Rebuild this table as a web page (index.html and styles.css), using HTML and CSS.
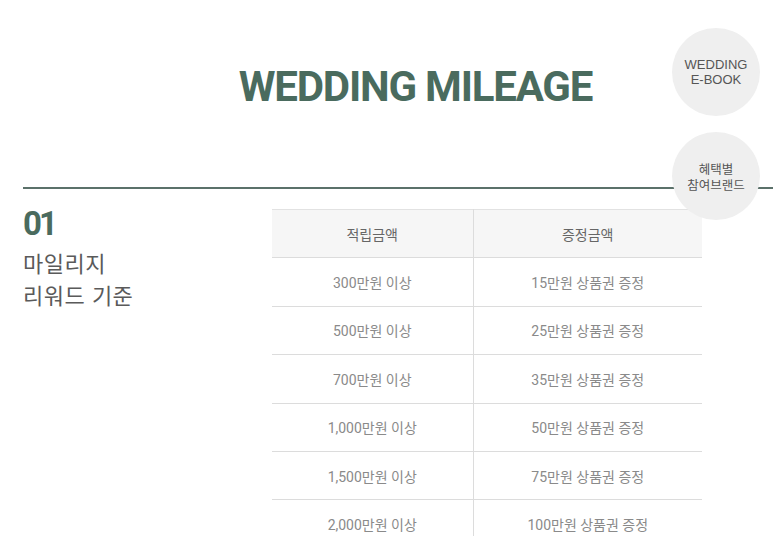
FILE: index.html
```html
<!DOCTYPE html>
<html lang="ko">
<head>
<meta charset="utf-8">
<title>Wedding Mileage</title>
<link rel="stylesheet" href="styles.css">
</head>
<body>
<div class="page">
  <header class="hero">
    <h1 class="title">WEDDING MILEAGE</h1>
  </header>
  <section class="section">
    <div class="rule"></div>
    <div class="content">
      <div class="side">
        <div class="num">01</div>
        <div class="label">마일리지<br>리워드 기준</div>
      </div>
      <table class="table">
        <thead>
          <tr><th>적립금액</th><th>증정금액</th></tr>
        </thead>
        <tbody>
          <tr><td>300만원 이상</td><td>15만원 상품권 증정</td></tr>
          <tr><td>500만원 이상</td><td>25만원 상품권 증정</td></tr>
          <tr><td>700만원 이상</td><td>35만원 상품권 증정</td></tr>
          <tr><td>1,000만원 이상</td><td>50만원 상품권 증정</td></tr>
          <tr><td>1,500만원 이상</td><td>75만원 상품권 증정</td></tr>
          <tr><td>2,000만원 이상</td><td>100만원 상품권 증정</td></tr>
        </tbody>
      </table>
    </div>
  </section>
  <nav class="floating">
    <a class="bubble en">WEDDING<br>E-BOOK</a>
    <a class="bubble ko">혜택별<br>참여브랜드</a>
  </nav>
</div>
</body>
</html>
```

FILE: styles.css
```css
* { box-sizing: border-box; }
html, body { margin: 0; padding: 0; background: #fff; }
body {
  font-family: "Noto Sans CJK KR", "Noto Sans", sans-serif;
  overflow: hidden;
  height: 536px;
}
.page { position: relative; width: 773px; }
.hero {
  padding: 63px 0 0 58px;
  height: 187px;
  display: flex;
  justify-content: center;
}
.title {
  margin: 0;
  font-family: Roboto, "Liberation Sans", sans-serif;
  font-weight: 700;
  font-size: 42px;
  line-height: 48px;
  letter-spacing: -1.2px;
  color: #4a6b5e;
}
.section { padding-left: 23px; }
.rule { height: 2px; background: #5b716a; }
.content {
  display: flex;
  padding-top: 20px;
}
.side { width: 249px; }
.num {
  font-family: Roboto, "Liberation Sans", sans-serif;
  font-weight: 700;
  font-size: 33px;
  line-height: 28px;
  letter-spacing: -3px;
  color: #4a6b5e;
  margin-top: 1px;
}
.label {
  margin-top: 8px;
  font-size: 22px;
  line-height: 32px;
  color: #5a5a5a;
  letter-spacing: 0.5px;
}
.table {
  width: 430px;
  border-collapse: collapse;
  font-family: Roboto, "Noto Sans CJK KR", sans-serif;
  font-size: 14px;
  color: #8a8a8a;
  table-layout: fixed;
}
.table th, .table td {
  height: 48.4px;
  padding: 0;
  text-align: center;
  border-bottom: 1px solid #dcdcdc;
  vertical-align: middle;
}
.table th {
  background: #f6f6f6;
  font-weight: 400;
  color: #666;
  border-top: 1px solid #e2e2e2;
}
.table th:first-child, .table td:first-child {
  width: 201px;
  border-right: 1px solid #dcdcdc;
}
.floating {
  position: absolute;
  top: 28px;
  left: 672px;
  display: flex;
  flex-direction: column;
  gap: 16px;
}
.bubble {
  width: 88px;
  height: 88px;
  border-radius: 50%;
  background: #efefef;
  display: flex;
  align-items: center;
  justify-content: center;
  text-align: center;
  font-size: 13px;
  line-height: 15px;
  color: #555;
}
.bubble.en { font-family: "Liberation Sans", Arial, sans-serif; }
.bubble.ko { font-family: "Noto Sans CJK KR", sans-serif; font-size: 12.5px; line-height: 16px; padding-top: 2px; }
```
